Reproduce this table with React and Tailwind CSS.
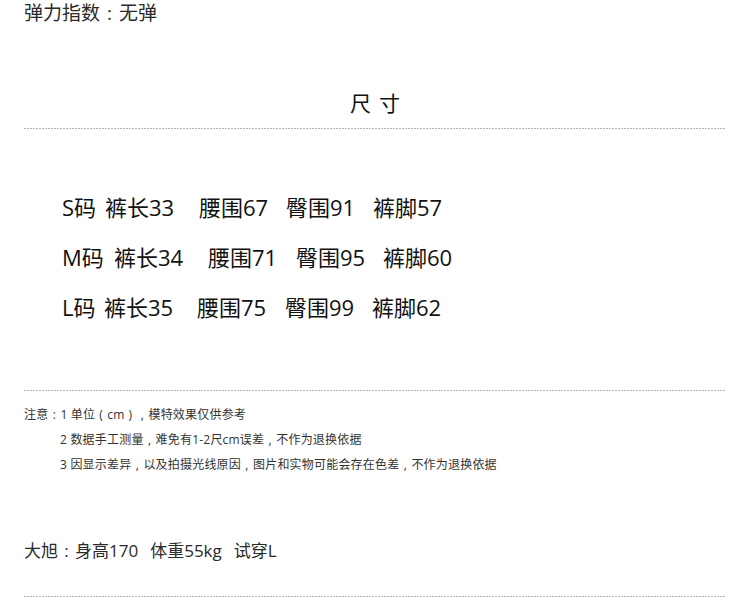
const W = ({ children }) => (
  <span className="inline-block w-[1em] text-center">{children}</span>
);

export default function App() {
  const font = { fontFamily: '"Open Sans", "Noto Sans CJK SC", sans-serif' };
  const Dots = ({ className = "" }) => (
    <div
      className={`mx-[24px] h-px bg-[linear-gradient(to_right,#b5b5b5_66%,transparent_66%)] bg-[length:3px_1px] bg-repeat-x ${className}`}
    />
  );
  const rows = [
    { cells: ["S码", "裤长33", "腰围67", "臀围91", "裤脚57"], w: ["w-[43px]", "w-[94px]", "w-[87px]", "w-[87px]"] },
    { cells: ["M码", "裤长34", "腰围71", "臀围95", "裤脚60"], w: ["w-[52px]", "w-[94px]", "w-[88px]", "w-[87px]"] },
    { cells: ["L码", "裤长35", "腰围75", "臀围99", "裤脚62"], w: ["w-[42px]", "w-[93px]", "w-[88px]", "w-[87px]"] },
  ];
  return (
    <div className="w-[750px] h-[610px] bg-white text-[#222] overflow-hidden" style={font}>
      <div className="pl-[24px] h-[26px] text-[19px] leading-[26px] text-[#2a2a2a]">
        弹力指数<W>:</W>无弹
      </div>
      <div className="mt-[64px] h-[26px] text-center text-[21px] leading-[26px] tracking-[8px] pl-[8px] text-[#111]">尺寸</div>
      <Dots className="mt-[12px]" />
      <div className="mt-[65px] pl-[62px] flex flex-col gap-[24px] text-[22px] leading-[26px] text-[#111]">
        {rows.map((r, i) => (
          <div key={i} className="flex h-[26px] whitespace-nowrap">
            {r.cells.map((t, j) => (
              <span key={j} className={`shrink-0 ${r.w[j] || ""}`}>
                {t}
              </span>
            ))}
          </div>
        ))}
      </div>
      <Dots className="mt-[70px]" />
      <div className="mt-[11px] text-[12px] leading-[25px] tracking-[0.2px] text-[#333]">
        <div className="pl-[24px]">
          注意<W>:</W>1 单位<W>(</W>cm<W>)</W><W>,</W>模特效果仅供参考
        </div>
        <div className="pl-[60px]">
          2 数据手工测量<W>,</W>难免有1-2尺cm误差<W>,</W>不作为退换依据
        </div>
        <div className="pl-[60px]">
          3 因显示差异<W>,</W>以及拍摄光线原因<W>,</W>图片和实物可能会存在色差<W>,</W>不作为退换依据
        </div>
      </div>
      <div className="mt-[62px] pl-[24px] text-[17px] leading-[24px] text-[#2a2a2a] flex whitespace-nowrap">
        <span>大旭<W>:</W>身高170</span>
        <span className="ml-[12px]">体重55kg</span>
        <span className="ml-[12px]">试穿L</span>
      </div>
      <Dots className="mt-[33px]" />
    </div>
  );
}
